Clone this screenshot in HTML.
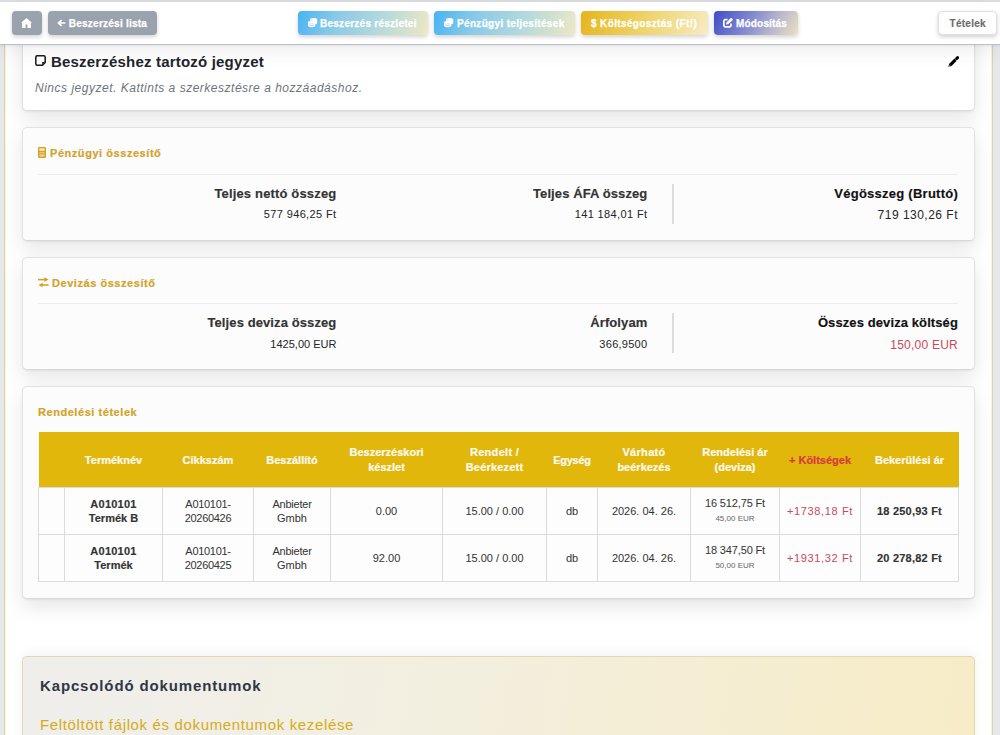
<!DOCTYPE html>
<html><head><meta charset="utf-8">
<style>
*{box-sizing:border-box;margin:0;padding:0}
html,body{width:1000px;height:735px;overflow:hidden}
body{font-family:"Liberation Sans",sans-serif;background:#e6e8ec;position:relative;color:#212529}
.abs{position:absolute}
#wrap{position:absolute;left:4px;top:0;width:989px;height:735px;border-left:1px solid #d9d3b3;border-right:1px solid #d9d3b3;box-shadow:inset 1px 0 #f8f4d6,inset -1px 0 #f8f4d6;background:#fff}
.card{position:absolute;left:22px;width:953px;background:#fcfcfc;border:1px solid #e2e2e2;border-bottom-color:#d8d8d8;border-radius:5px;box-shadow:0 8px 20px rgba(0,0,0,.1),0 1px 2px rgba(0,0,0,.05)}
#hdr{position:absolute;left:0;top:2px;width:1000px;height:43px;background:#fff;border-bottom:1px solid #b9c0ca;box-shadow:0 1px 3px rgba(0,0,0,.06),0 4px 22px rgba(0,0,0,.08)}
#topstrip{position:absolute;left:0;top:0;width:1000px;height:2px;background:#dfe1e4}
.btn{position:absolute;top:10.5px;height:24px;border-radius:4px;color:#fff;font-weight:bold;font-size:10px;white-space:nowrap;box-shadow:0 2px 4px rgba(0,0,0,.18);line-height:24px;-webkit-text-stroke:.25px currentColor}
.btn span{position:absolute;top:1px}
.sech{-webkit-text-stroke:.2px currentColor;position:absolute;color:#d3a32a;font-weight:bold;font-size:11px;white-space:nowrap;letter-spacing:.55px}
.sep{position:absolute;left:16px;width:920px;height:1px;background:#eeeeee}
.lbl{-webkit-text-stroke:.15px currentColor;position:absolute;font-weight:bold;font-size:13px;text-align:right;white-space:nowrap;color:#333;letter-spacing:.1px;margin-top:1px}
.val{position:absolute;font-size:11px;text-align:right;white-space:nowrap;color:#212529;margin-top:1px}
.vdiv{position:absolute;width:2px;background:#dcdcdc}
table{position:absolute;left:38px;top:432px;border-collapse:collapse;table-layout:fixed;font-size:11px}
th{background:#e1b70b;color:#fffaf0;-webkit-text-stroke:.2px currentColor;font-weight:bold;height:55px;text-align:center;line-height:15px;padding:2px 0 0 0}
.sm{font-size:8px;color:#666}
.n3{letter-spacing:-.3px}.n2{letter-spacing:-.22px}.n1{letter-spacing:-.14px}.p2{letter-spacing:.23px}
.red{color:#c64a5a}
b{-webkit-text-stroke:.15px currentColor}
td{border:1px solid #dcdcdc;text-align:center;height:47px;line-height:14px;background:#fdfdfd;color:#333;padding:1px 0 0 0}
</style></head><body>
<div id="wrap"></div><div class="abs" style="left:993px;top:0;width:2px;height:735px;background:#e7e5f2"></div>

<!-- note card -->
<div class="card" style="top:20px;height:91px;background:#fff"></div>
<svg class="abs" style="left:35px;top:55px" width="11" height="11" viewBox="0 0 11 11"><path d="M2.2 .8h6.6a1.4 1.4 0 011.4 1.4v5.3L7.5 10.2H2.2A1.4 1.4 0 01.8 8.8V2.2A1.4 1.4 0 012.2 .8z" fill="none" stroke="#1b1b1b" stroke-width="1.55"/><path d="M10 7.1H7.1v2.9z" fill="#2a2a1a"/></svg>
<div class="abs" style="left:51px;top:53px;font-size:15px;font-weight:bold;color:#212529;white-space:nowrap;letter-spacing:.19px" id="t_note" >Beszerzéshez tartozó jegyzet</div>
<svg class="abs" style="left:947.5px;top:56px" width="11.2" height="11.2" viewBox="0 0 12 12"><path d="M2.6 9.4L8.1 3.9" stroke="#000" stroke-width="3.4"/><path d="M9.3 2.7l1-1" stroke="#000" stroke-width="3.2" stroke-linecap="round"/><path d="M.4 11.6l.9-3.5 2.6 2.6z" fill="#000"/><path d="M1.3 10.7l.35-1.3 1 1z" fill="#bbb"/></svg>
<div class="abs" style="left:35px;top:80.5px;font-size:12px;font-style:italic;color:#6c757d;white-space:nowrap;letter-spacing:.51px" id="t_nonote">Nincs jegyzet. Kattints a szerkesztésre a hozzáadáshoz.</div>

<!-- financial summary -->
<div class="card" style="top:127px;height:114px"></div>
<svg class="abs" style="left:38px;top:147px" width="8" height="11" viewBox="0 0 8 11"><rect x="0" y="0" width="8" height="11" rx="1.2" fill="#d3a32a"/><rect x="1.4" y="1.4" width="5.2" height="2.3" fill="#fbf0cc"/><rect x="1.4" y="4.9" width="5.2" height="1.5" fill="#e9c46a"/><rect x="1.4" y="7.4" width="5.2" height="2.2" fill="#f0d48a"/></svg>
<div class="sech" style="left:50px;top:147px" id="t_fin">Pénzügyi összesítő</div>
<div class="sep abs" style="left:38px;top:174px;width:920px"></div>
<div class="lbl" id="l1" style="right:663.6px;letter-spacing:.16px;top:185px">Teljes nettó összeg</div>
<div class="val" id="v1" style="letter-spacing:.36px;right:663.6px;top:207px">577 946,25 Ft</div>
<div class="lbl" id="l2" style="right:352.6px;top:185px">Teljes ÁFA összeg</div>
<div class="val" id="v2" style="letter-spacing:.37px;right:352.6px;top:207px">141 184,01 Ft</div>
<div class="vdiv" style="left:672px;top:184px;height:40px"></div>
<div class="lbl" id="l3" style="color:#111;letter-spacing:.25px;right:42px;top:185px">Végösszeg (Bruttó)</div>
<div class="val" id="v3" style="font-size:12px;letter-spacing:.49px;right:42px;top:207px">719 130,26 Ft</div>

<!-- currency summary -->
<div class="card" style="top:257px;height:113px"></div>
<svg class="abs" style="left:38px;top:277px" width="11" height="11" viewBox="0 0 11 11"><g fill="#d3a32a"><rect x="0" y="1.8" width="7" height="1.6"/><path d="M6.4 .3l4.2 2.3-4.2 2.3z"/><rect x="3.6" y="7.2" width="7" height="1.6"/><path d="M4.6 5.8L.4 8l4.2 2.3z"/></g></svg>
<div class="sech" style="left:52px;top:276.5px" id="t_dev">Devizás összesítő</div>
<div class="sep abs" style="left:38px;top:303px;width:920px"></div>
<div class="lbl" id="l4" style="right:663.6px;top:314px">Teljes deviza összeg</div>
<div class="val" id="v4" style="right:663.6px;top:337px">1425,00 EUR</div>
<div class="lbl" id="l5" style="right:352.6px;top:314px">Árfolyam</div>
<div class="val" id="v5" style="letter-spacing:.27px;right:352.6px;top:337px">366,9500</div>
<div class="vdiv" style="left:672px;top:313px;height:40px"></div>
<div class="lbl" id="l6" style="color:#111;right:42px;top:314px">Összes deviza költség</div>
<div class="val" id="v6" style="font-size:12px;letter-spacing:.24px;right:42px;top:337px;color:#c64a5a">150,00 EUR</div>

<!-- items -->
<div class="card" style="top:386px;height:213px"></div>
<div class="sech" style="left:38px;top:406px" id="t_items">Rendelési tételek</div>
<table>
<colgroup><col style="width:26px"><col style="width:98px"><col style="width:91px"><col style="width:77px"><col style="width:112px"><col style="width:104px"><col style="width:51px"><col style="width:93px"><col style="width:89px"><col style="width:81px"><col style="width:98px"></colgroup>
<tr><th></th><th><span id="h1">Terméknév</span></th><th><span id="h2">Cikkszám</span></th><th><span id="h3">Beszállító</span></th><th><span id="h4a">Beszerzéskori</span><br><span id="h4b">készlet</span></th><th><span id="h5a" style="letter-spacing:.29px">Rendelt /</span><br><span id="h5b" style="letter-spacing:.2px">Beérkezett</span></th><th><span id="h6" style="letter-spacing:-.27px">Egység</span></th><th><span id="h7a" style="letter-spacing:.31px">Várható</span><br><span id="h7b">beérkezés</span></th><th><span id="h8a">Rendelési ár</span><br><span id="h8b">(deviza)</span></th><th style="color:#d63a3c"><span id="h9">+ Költségek</span></th><th><span id="h10">Bekerülési ár</span></th></tr>
<tr><td></td><td><b><span id="c1a" class="p2">A010101</span><br><span id="c1b">Termék B</span></b></td><td><span id="c2a" class="n3">A010101-</span><br><span id="c2b" class="n3">20260426</span></td><td><span id="c3a" class="n2">Anbieter</span><br><span id="c3b">Gmbh</span></td><td><span id="c4">0.00</span></td><td><span id="c5">15.00 / 0.00</span></td><td><span id="c6">db</span></td><td><span id="c7">2026. 04. 26.</span></td><td><span id="c8a" class="n1">16 512,75 Ft</span><br><span class="sm" id="c8b">45,00 EUR</span></td><td class="red"><span id="c9" style="letter-spacing:.62px">+1738,18 Ft</span></td><td><b id="c10" style="letter-spacing:.22px">18 250,93 Ft</b></td></tr>
<tr><td></td><td><b><span class="p2">A010101</span><br>Termék</b></td><td><span class="n3">A010101-<br>20260425</span></td><td><span class="n2">Anbieter</span><br>Gmbh</td><td><span id="d4">92.00</span></td><td>15.00 / 0.00</td><td>db</td><td>2026. 04. 26.</td><td><span class="n1">18 347,50 Ft</span><br><span class="sm">50,00 EUR</span></td><td class="red" style="letter-spacing:.62px">+1931,32 Ft</td><td><b style="letter-spacing:.22px">20 278,82 Ft</b></td></tr>
</table>

<!-- documents -->
<div class="card" style="top:656px;height:100px;border-radius:4px;background:linear-gradient(100deg,#efeeec 0%,#f3efdf 45%,#f7ecc6 100%);border-color:#e3d9b0;box-shadow:0 -3px 12px rgba(0,0,0,.05)"></div>
<div class="abs" style="left:40px;top:677px;font-size:15px;font-weight:bold;color:#2f3746;white-space:nowrap;letter-spacing:.86px" id="t_docs">Kapcsolódó dokumentumok</div>
<div class="abs" style="left:40px;top:716px;font-size:15px;color:#d6ab1a;white-space:nowrap;letter-spacing:.65px" id="t_docs2">Feltöltött fájlok és dokumentumok kezelése</div>

<!-- header -->
<div id="topstrip"></div>
<div id="hdr"></div>
<div class="btn" style="left:11.5px;width:30px;background:#9aa2ae">
<svg class="abs" style="left:9.3px;top:7.3px" width="11" height="10" viewBox="0 0 11 10"><path d="M5.5 0L0 4.8h1.1V10h3.5V6.4h1.8V10h3.5V4.8H11z" fill="#fff"/></svg>
</div>
<div class="btn" style="left:48px;width:109px;background:#9aa2ae"><svg class="abs" style="left:8.5px;top:8.3px" width="9" height="8" viewBox="0 0 9 8"><path d="M8.3 4H1.8M4.6 1.1L1.5 4l3.1 2.9" fill="none" stroke="#fff" stroke-width="1.7"/></svg><span style="left:20.8px;letter-spacing:.24px" id="t_back">Beszerzési lista</span></div>
<div class="btn" style="left:298px;width:130px;background:linear-gradient(110deg,#48b3f3 0%,#88c9e8 28%,#b0d8dd 60%,#eee8c4 100%)">
<svg class="abs" style="left:9.8px;top:7.3px" width="10" height="10" viewBox="0 0 10 10"><path d="M2 1.5C2 .6 3.6 0 5.6 0s3.6.6 3.6 1.5v3.5c0 .7-1.1 1.2-2.6 1.4V4.2C6.6 3.2 5.3 2.7 3.6 2.6L2 2.7z" fill="#fff"/><path d="M0 4.3C0 3.4 1.6 2.8 3.65 2.8S7.3 3.4 7.3 4.3V7.8C7.3 8.7 5.7 9.3 3.65 9.3S0 8.7 0 7.8z" fill="#fff"/><path d="M1.3 6h4.7M1.3 7.6h4.7" stroke="rgba(90,170,220,.55)" stroke-width=".7"/></svg>
<span style="left:22px;letter-spacing:.26px" id="t_b1">Beszerzés részletei</span></div>
<div class="btn" style="left:434px;width:141px;background:linear-gradient(110deg,#48b3f3 0%,#88c9e8 28%,#b0d8dd 60%,#eee8c4 100%)">
<svg class="abs" style="left:9.7px;top:7.3px" width="10" height="10" viewBox="0 0 10 10"><path d="M2 1.5C2 .6 3.6 0 5.6 0s3.6.6 3.6 1.5v3.5c0 .7-1.1 1.2-2.6 1.4V4.2C6.6 3.2 5.3 2.7 3.6 2.6L2 2.7z" fill="#fff"/><path d="M0 4.3C0 3.4 1.6 2.8 3.65 2.8S7.3 3.4 7.3 4.3V7.8C7.3 8.7 5.7 9.3 3.65 9.3S0 8.7 0 7.8z" fill="#fff"/><path d="M1.3 6h4.7M1.3 7.6h4.7" stroke="rgba(90,170,220,.55)" stroke-width=".7"/></svg>
<span style="left:23px;letter-spacing:.33px" id="t_b2">Pénzügyi teljesítések</span></div>
<div class="btn" style="left:581px;width:127px;background:linear-gradient(110deg,#e5b51c 0%,#efd36a 50%,#f6ecc4 100%)"><span style="left:10px;letter-spacing:.37px" id="t_b3">$ Költségosztás (Ft!)</span></div>
<div class="btn" style="left:714px;width:83.5px;background:linear-gradient(120deg,#3f4cc6 0%,#7f86d0 40%,#bdb9cc 72%,#ebe2c2 100%)">
<svg class="abs" style="left:9.3px;top:7.8px" width="10" height="10" viewBox="0 0 10 10"><path d="M4.6 1.7H2.2A1.3 1.3 0 00.9 3v4.5a1.3 1.3 0 001.3 1.3h4.5A1.3 1.3 0 008 7.5V5.4" fill="none" stroke="#fff" stroke-width="1.7"/><path d="M3 6.6l.45-2.1L7.6.35a.8.8 0 011.1 0l.75.75a.8.8 0 010 1.1L5.1 6.15z" fill="#fff"/></svg>
<span style="left:22px;letter-spacing:.18px" id="t_b4">Módosítás</span></div>
<div class="btn" style="left:938px;width:58.5px;height:24.5px;background:#fff;color:#6b6b6b;border:1px solid #e0e0e0;-webkit-text-stroke:.15px #6b6b6b"><span style="left:10.5px;top:0;letter-spacing:.28px" id="t_b5">Tételek</span></div>
</body></html>
